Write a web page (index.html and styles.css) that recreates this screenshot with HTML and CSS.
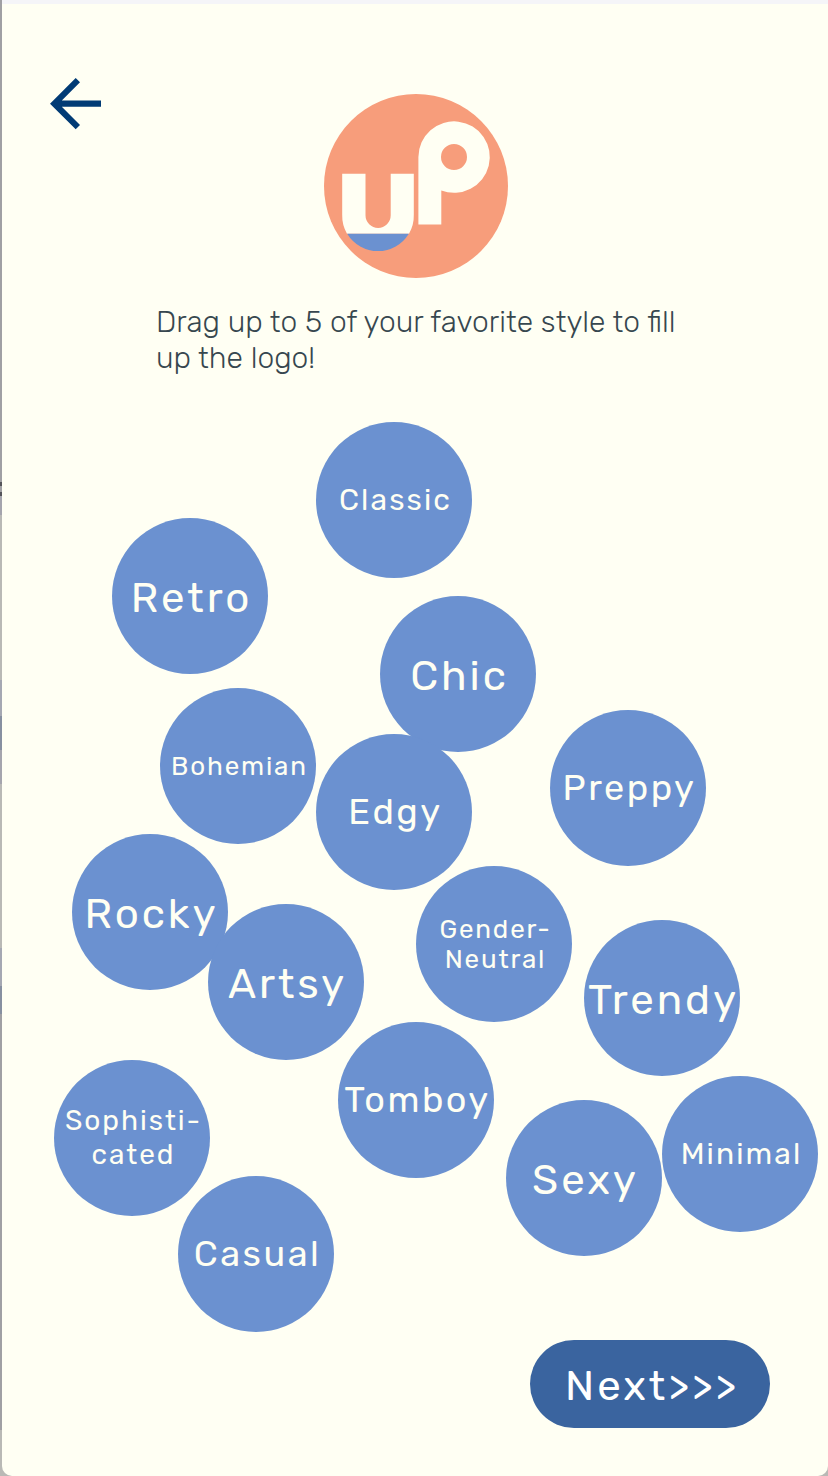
FILE: index.html
```html
<!DOCTYPE html>
<html lang="en">
<head>
<meta charset="utf-8">
<meta name="viewport" content="width=device-width, initial-scale=1">
<title>Pick your style</title>
<link rel="stylesheet" href="styles.css">
</head>
<body>
<main class="screen">
  <header class="top">
    <a class="back" href="#back" aria-label="Back">
      <svg width="52" height="52" viewBox="0 0 52 52" aria-hidden="true"><path d="M0 25.7 25.7 0 30 4.3 11.8 22.6H51V28.8H11.8L30 47 25.7 51.3Z" fill="#013b75"/></svg>
    </a>
    <svg class="logo" viewBox="0 0 184 184" role="img" aria-label="up">
      <circle cx="92" cy="92" r="92" fill="#f79d7b"/>
      <path d="M18.2 79.7H41.5V121.3A12.6 12.6 0 0 0 66.7 121.3V79.7H89.8V121A35.8 35.8 0 0 1 85 139.7H23A35.8 35.8 0 0 1 18.2 121Z" fill="#fffff3"/>
      <path d="M23.2 139.7H84.8A36 36 0 0 1 23.2 139.7Z" fill="#6b91d0"/>
      <path fill-rule="evenodd" d="M94.4 130.6V63A35.7 35.7 0 1 1 117.3 96.4V130.6ZM143 63A13 13 0 1 0 117 63A13 13 0 1 0 143 63Z" fill="#fffff3"/>
    </svg>
  </header>
  <p class="hint">Drag up to 5 of your favorite style to fill up the logo!</p>
  <section class="canvas" aria-label="Styles">
    <button class="bubble small classic">Classic</button>
    <button class="bubble large retro">Retro</button>
    <button class="bubble large chic">Chic</button>
    <button class="bubble tiny bohemian">Bohemian</button>
    <button class="bubble medium edgy">Edgy</button>
    <button class="bubble medium preppy">Preppy</button>
    <button class="bubble large rocky">Rocky</button>
    <button class="bubble large artsy">Artsy</button>
    <button class="bubble tiny gender">Gender-<br>Neutral</button>
    <button class="bubble large trendy">Trendy</button>
    <button class="bubble medium tomboy">Tomboy</button>
    <button class="bubble compact sophisticated">Sophisti-<br>cated</button>
    <button class="bubble large sexy">Sexy</button>
    <button class="bubble small minimal">Minimal</button>
    <button class="bubble medium casual">Casual</button>
  </section>
  <footer class="actions">
    <button class="next">Next&gt;&gt;&gt;</button>
  </footer>
</main>
</body>
</html>
```
FILE: styles.css
```css
* { box-sizing: border-box; }

body {
  margin: 0;
  min-height: 100vh;
  padding-left: 2px;
  display: flex;
  font-family: Rubik, Roboto, sans-serif;
  background: linear-gradient(#a0a0a3 0 482px, #55555a 482px 486px, #a0a0a3 486px 492px, #55555a 492px 496px, #a5a5ad 496px 515px, #b9b9b5 515px 680px, #a5a8b2 680px 716px, #8790a0 716px 750px, #a5a5ad 750px 784px, #b9b9b5 784px 948px, #a5a8b2 948px 986px, #8790a0 986px 1014px, #a0a0a3 1014px 1430px, #b9b9b5 1430px);
}

.screen {
  flex: 1;
  display: flex;
  flex-direction: column;
  border-top: 4px solid #f5f5f8;
  border-radius: 0 0 10px 10px;
  background: #fffff3;
}

.top {
  display: grid;
  grid-template-columns: 1fr auto 1fr;
  align-items: start;
  padding: 74px 46px 0 48px;
}

.back { justify-self: start; }
.back svg { display: block; }

.logo {
  width: 184px;
  margin-top: 16px;
}

.hint {
  width: 540px;
  max-width: 70%;
  margin: 26px 0 0 154px;
  font-size: 30px;
  font-weight: 300;
  line-height: 36px;
  color: #37474f;
}

.canvas {
  position: relative;
  min-height: 956px;
}

.bubble {
  position: absolute;
  width: 156px;
  height: 156px;
  padding: 0 0 0 3px;
  border: 0;
  border-radius: 50%;
  font-family: inherit;
  letter-spacing: 0.07em;
  white-space: nowrap;
  color: #fffff3;
  background: #6b91d0;
  cursor: grab;
  display: flex;
  align-items: center;
  justify-content: center;
}

.large { padding-top: 4px; font-size: 42px; }
.medium { padding-bottom: 2px; font-size: 36px; }
.small { font-size: 30px; }
.compact { font-size: 28px; line-height: 34px; }
.tiny { padding-top: 2px; font-size: 26px; line-height: 30px; }

.classic { left: 314px; top: 46px; }
.retro { left: 110px; top: 142px; }
.chic { left: 378px; top: 220px; }
.bohemian { left: 158px; top: 312px; }
.edgy { left: 314px; top: 358px; }
.preppy { left: 548px; top: 334px; }
.rocky { left: 70px; top: 458px; }
.artsy { left: 206px; top: 528px; }
.gender { left: 414px; top: 490px; }
.trendy { left: 582px; top: 544px; }
.tomboy { left: 336px; top: 646px; }
.sophisticated { left: 52px; top: 684px; }
.sexy { left: 504px; top: 724px; }
.minimal { left: 660px; top: 700px; }
.casual { left: 176px; top: 800px; }

.actions {
  display: flex;
  justify-content: flex-end;
  padding: 8px 58px 48px;
}

.next {
  width: 240px;
  height: 88px;
  padding: 4px 0 0 4px;
  border: 0;
  border-radius: 44px;
  font-family: inherit;
  font-size: 42px;
  letter-spacing: 0.07em;
  color: #fff;
  background: #3a649f;
  cursor: pointer;
}
```
